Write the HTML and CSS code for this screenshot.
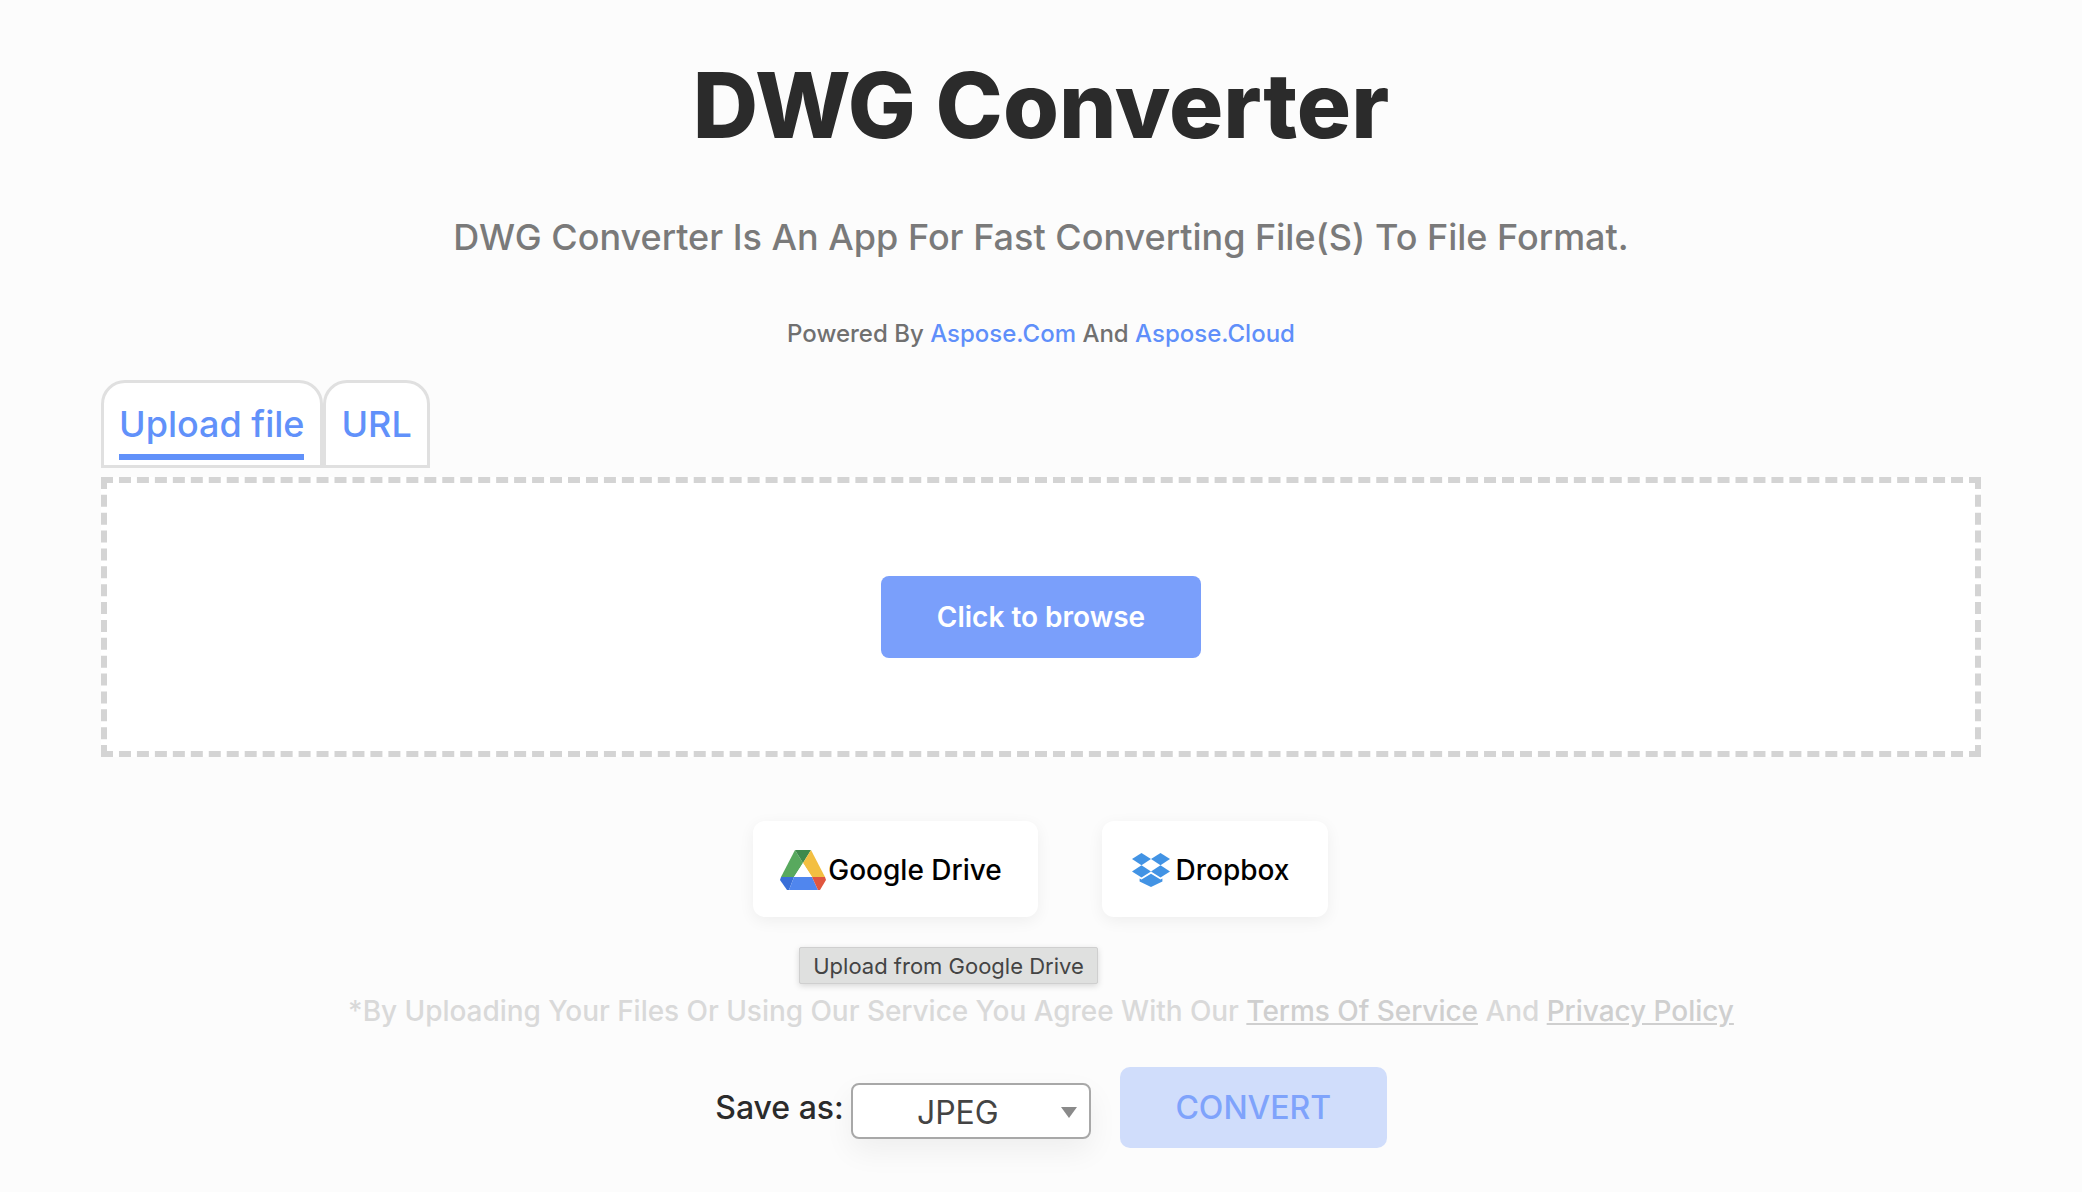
FILE: index.html
```html
<!DOCTYPE html>
<html lang="en">
  <head>
    <meta charset="UTF-8" />
    <meta name="viewport" content="width=device-width, initial-scale=1.0" />
    <title>DWG Converter</title>
    <link rel="stylesheet" href="styles.css">
  </head>
  <body>
    <main>
      <h1>DWG Converter</h1>
      <p class="subtitle">DWG Converter Is An App For Fast Converting File(S) To File Format.</p>
      <p class="powered">Powered By <a href="#">Aspose.Com</a> And <a href="#">Aspose.Cloud</a></p>

      <div class="tabs">
        <div class="tab first-tab"><span class="tab-label active">Upload file</span></div>
        <div class="tab"><span class="tab-label">URL</span></div>
      </div>

      <div class="dropzone">
        <button class="browse-btn">Click to browse</button>
      </div>

      <div class="cloud-row">
        <button class="cloud-btn drive-btn">
          <svg class="drive-icon" viewBox="0 0 46 40" width="46" height="40">
            <path fill="#58a95e" d="M15 0 L23 13 L14 27 H1 Z"/>
            <path fill="#3f8a4c" d="M15 0 H31 L23 13 Z"/>
            <path fill="#f3bf41" d="M31 0 L45 27 H32 L23 13 Z"/>
            <path fill="#3a6fd8" d="M1 27 H14 L9 40 H7 L0 30 Z"/>
            <path fill="#5086ee" d="M14 27 H32 L38 40 H9 Z"/>
            <path fill="#e0563f" d="M32 27 H45 L46 30 L40 40 H38 Z"/>
            <path fill="#ffffff" d="M23 13 L32 27 H14 Z"/>
          </svg>
          Google Drive
        </button>
        <button class="cloud-btn dropbox-btn">
          <svg class="dropbox-icon" viewBox="0 0 40 36" width="38" height="36">
            <path fill="#4293e4" d="M10 0 L20 6.5 L10 13 L0 6.5 Z"/>
            <path fill="#4293e4" d="M30 0 L40 6.5 L30 13 L20 6.5 Z"/>
            <path fill="#4293e4" d="M10 13 L20 19.5 L10 26 L0 19.5 Z"/>
            <path fill="#4293e4" d="M30 13 L40 19.5 L30 26 L20 19.5 Z"/>
            <path fill="#4293e4" d="M8 27 L10 28 L20 22 L30 28 L32 27 V30 L20 36 L8 30 Z"/>
          </svg>
          Dropbox
        </button>
        <div class="tooltip">Upload from Google Drive</div>
      </div>

      <p class="terms">*By Uploading Your Files Or Using Our Service You Agree With Our <a href="#">Terms Of Service</a> And <a href="#">Privacy Policy</a></p>

      <div class="save-row">
        <label class="save-label">Save as:</label>
        <div class="select">
          <span>JPEG</span>
          <i class="caret"></i>
        </div>
        <button class="convert-btn">CONVERT</button>
      </div>
    </main>
  </body>
</html>
```

FILE: styles.css
```css
body {
  font-family: Inter, "Liberation Sans", sans-serif;
  margin: 0;
  padding: 0;
  background-color: #fcfcfc;
  color: #2b2b2b;
  overflow: hidden;
}
main {
  height: 1192px;
  padding: 0 101px;
  box-sizing: border-box;
  text-align: center;
}
h1 {
  margin: 0;
  padding-top: 52px;
  font-size: 90.5px;
  line-height: 106px;
  font-weight: 800;
  color: #2b2b2b;
}
.subtitle {
  margin: 57px 0 0;
  font-size: 36px;
  line-height: 44px;
  font-weight: 500;
  color: #7a7a7a;
}
.powered {
  margin: 59px 0 0;
  font-size: 24px;
  line-height: 32px;
  font-weight: 500;
  color: #707070;
}
.powered a {
  color: #5f8ffa;
  text-decoration: none;
}
.tabs {
  display: flex;
  margin-top: 30px;
}
.tab {
  background: #ffffff;
  border: 3px solid #e0e0e0;
  border-radius: 24px 24px 0 0;
  padding: 18px 15px 0;
  height: 88px;
  box-sizing: border-box;
}
.first-tab {
  padding-right: 16px;
}
.tab-label {
  display: inline-block;
  height: 59px;
  box-sizing: border-box;
  font-size: 36px;
  line-height: 46px;
  font-weight: 500;
  color: #6191fa;
}
.tab-label.active {
  border-bottom: 6px solid #6191fa;
}
.dropzone {
  margin-top: 9px;
  height: 280px;
  box-sizing: border-box;
  background: #ffffff;
  border: 6px dashed #d4d4d4;
  display: flex;
  align-items: center;
  justify-content: center;
}
.browse-btn {
  width: 320px;
  height: 82px;
  border: none;
  border-radius: 8px;
  background: #7a9ffb;
  color: #ffffff;
  font-family: inherit;
  font-size: 28px;
  font-weight: 600;
}
.cloud-row {
  position: relative;
  display: flex;
  justify-content: center;
  gap: 64px;
  margin-top: 64px;
  padding-right: 2px;
}
.cloud-btn {
  display: flex;
  align-items: center;
  justify-content: center;
  gap: 2px;
  height: 96px;
  padding: 2px 8px 0 0;
  border: none;
  border-radius: 12px;
  background: #ffffff;
  box-shadow: 0 4px 16px rgba(0, 0, 0, 0.06);
  color: #000000;
  font-family: inherit;
  font-size: 28px;
  font-weight: 500;
}
.drive-btn {
  width: 285px;
}
.dropbox-btn {
  width: 226px;
  gap: 6px;
}
.tooltip {
  position: absolute;
  left: 698px;
  top: 126px;
  width: 299px;
  height: 37px;
  box-sizing: border-box;
  background: #dfe0df;
  border: 1px solid #cfcfcf;
  border-radius: 2px;
  box-shadow: 0 2px 6px rgba(0, 0, 0, 0.15);
  color: #444444;
  font-size: 22px;
  line-height: 36px;
}
.terms {
  margin: 76px 0 0;
  font-size: 28px;
  line-height: 36px;
  font-weight: 500;
  letter-spacing: -0.04px;
  color: #d9d9d9;
}
.terms a {
  color: #cfcfcf;
  text-decoration: underline;
}
.save-row {
  display: flex;
  justify-content: center;
  gap: 28px;
  margin-top: 38px;
  padding-left: 20px;
  align-items: center;
}
.save-label {
  font-size: 32px;
  font-weight: 500;
  margin-right: -21px;
}
.select {
  position: relative;
  width: 240px;
  height: 56px;
  margin: 6px 1px 0 0;
  box-sizing: border-box;
  background: #ffffff;
  border: 2px solid #a8a8a8;
  border-radius: 8px;
  box-shadow: 0 12px 30px rgba(0, 0, 0, 0.06);
  font-size: 32px;
  line-height: 56px;
  color: #444444;
  padding-right: 26px;
}
.caret {
  position: absolute;
  right: 12px;
  top: 22px;
  border-left: 8px solid transparent;
  border-right: 8px solid transparent;
  border-top: 11px solid #8a8a8a;
}
.convert-btn {
  width: 267px;
  height: 81px;
  border: none;
  border-radius: 10px;
  background: #d0ddfb;
  color: #7fa3fb;
  font-family: inherit;
  font-size: 32px;
  font-weight: 500;
}
```
